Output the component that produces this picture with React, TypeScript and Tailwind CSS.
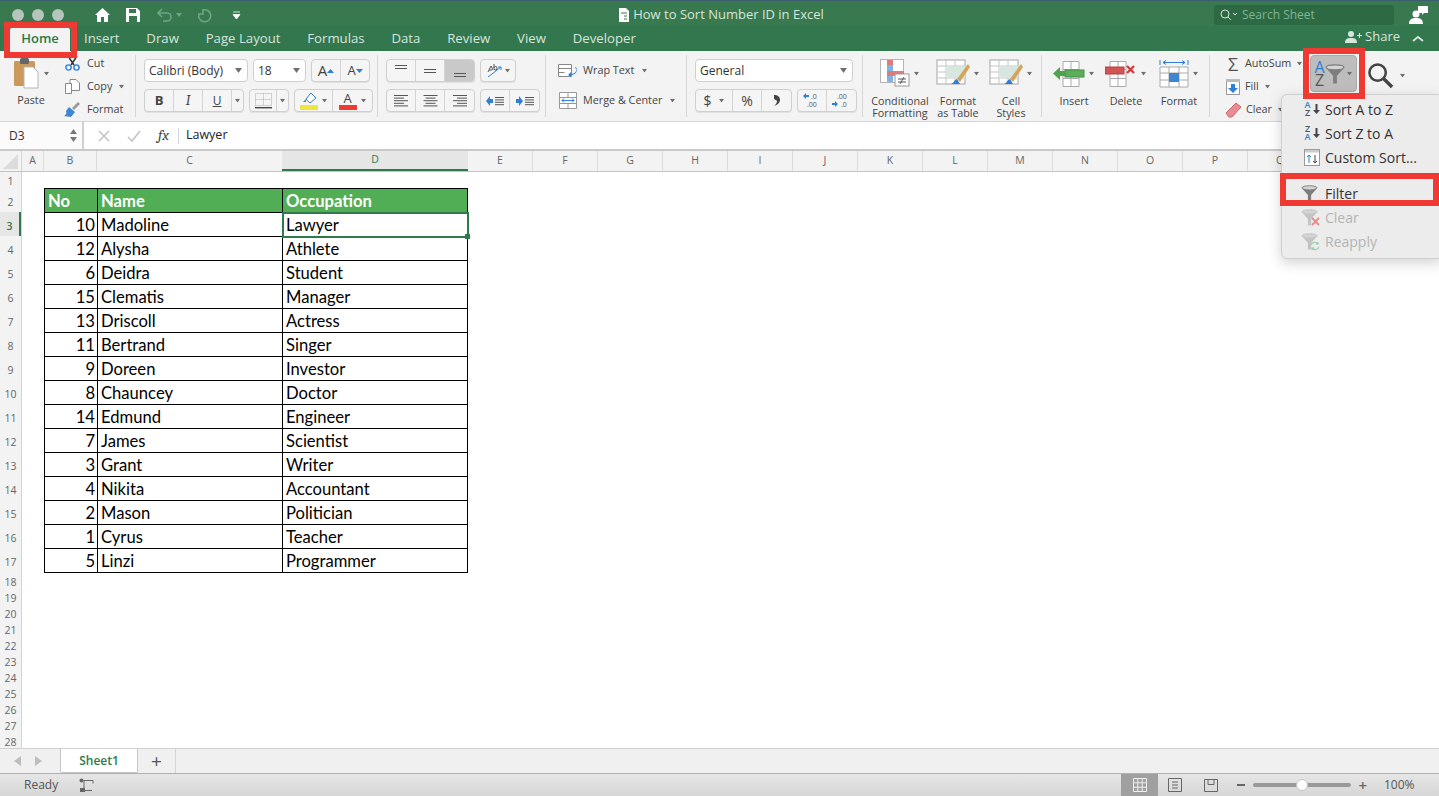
import React from 'react';

const ui = { fontFamily: '"Open Sans", "Liberation Sans", sans-serif' };
const cell = { fontFamily: 'Lato, "Liberation Sans", sans-serif' };

const columns = ['E', 'F', 'G', 'H', 'I', 'J', 'K', 'L', 'M', 'N', 'O', 'P', 'Q', 'R', 'S'];
const people: [number, string, string][] = [
  [10, 'Madoline', 'Lawyer'],
  [12, 'Alysha', 'Athlete'],
  [6, 'Deidra', 'Student'],
  [15, 'Clematis', 'Manager'],
  [13, 'Driscoll', 'Actress'],
  [11, 'Bertrand', 'Singer'],
  [9, 'Doreen', 'Investor'],
  [8, 'Chauncey', 'Doctor'],
  [14, 'Edmund', 'Engineer'],
  [7, 'James', 'Scientist'],
  [3, 'Grant', 'Writer'],
  [4, 'Nikita', 'Accountant'],
  [2, 'Mason', 'Politician'],
  [1, 'Cyrus', 'Teacher'],
  [5, 'Linzi', 'Programmer'],
];

function Caret({ className = '' }: { className?: string }) {
  return (
    <svg width="7" height="5" viewBox="0 0 7 5" className={`shrink-0 ${className}`}>
      <path d="M0 0h7L3.5 5z" fill="#6f6f6f" />
    </svg>
  );
}

function Funnel({ size = 18, color = '#7d7d7d' }: { size?: number; color?: string }) {
  return (
    <svg width={size} height={size} viewBox="0 0 18 18" className="shrink-0">
      <ellipse cx="9" cy="3" rx="8" ry="2.2" fill="#d4d4d4" stroke={color} strokeWidth="1" />
      <path d="M1 3.5 7.3 10.5V17.5H10.7V10.5L17 3.5C13 6 5 6 1 3.5z" fill={color} />
    </svg>
  );
}

function Seg({ w, children, active }: { w: number; children?: React.ReactNode; active?: boolean }) {
  return (
    <div
      style={{ width: w }}
      className={`flex h-full items-center justify-center border-r border-[#d4d4d4] last:border-r-0 ${active ? 'bg-[#c9c9c9]' : ''}`}
    >
      {children}
    </div>
  );
}

function BtnGroup({ children }: { children: React.ReactNode }) {
  return (
    <div className="flex h-[23px] overflow-hidden rounded-[4px] border border-[#cfcfcf] bg-[#f5f5f5] shadow-[0_1px_0_#e2e2e2]">
      {children}
    </div>
  );
}

function Lines({ kind }: { kind: 'l' | 'c' | 'r' }) {
  const rows = [14, 10, 14, 10, 14];
  return (
    <svg width="15" height="12" viewBox="0 0 15 12">
      {rows.map((w, i) => {
        const x = kind === 'l' ? 0 : kind === 'c' ? (15 - w) / 2 : 15 - w;
        return <rect key={i} x={x} y={i * 2.6} width={w} height="1" fill="#555" />;
      })}
    </svg>
  );
}

function Indent({ flip }: { flip?: boolean }) {
  return (
    <svg width="18" height="10" viewBox="0 0 18 10">
      <path d={flip ? 'M0 3h3V0l4 5-4 5V7H0z' : 'M7 3H4V0L0 5l4 5V7h3z'} fill="#2f7fd6" />
      {[1, 3.4, 5.8, 8.2].map((y) => (
        <rect key={y} x="9" y={y} width="9" height="1" fill="#555" />
      ))}
    </svg>
  );
}

function ClipRow({ icon, label, caret }: { icon: React.ReactNode; label: string; caret?: boolean }) {
  return (
    <div className="flex h-[23px] items-center">
      <div className="flex w-[20px] justify-center">{icon}</div>
      <span className="ml-[5px] text-[10.8px] text-[#444]">{label}</span>
      {caret && <Caret className="ml-[6px] scale-75" />}
    </div>
  );
}

function BigButton({ w, icon, lines, caret }: { w: number; icon: React.ReactNode; lines: string[]; caret?: boolean }) {
  return (
    <div style={{ width: w }} className="flex shrink-0 flex-col items-center">
      <div className="flex h-[37px] items-center justify-center">
        {icon}
        {caret && <Caret className="ml-[3px] scale-75" />}
      </div>
      <div className="mt-[3px] text-center text-[10.8px] leading-[12px] text-[#444]">
        {lines.map((l) => (
          <div key={l} className="whitespace-nowrap">{l}</div>
        ))}
      </div>
    </div>
  );
}

function VSep() {
  return <div className="mt-[4px] h-[62px] w-px shrink-0 bg-[#d6d6d6]" />;
}

function TableGridIcon({ children }: { children?: React.ReactNode }) {
  return (
    <svg width="34" height="30" viewBox="0 0 34 30">
      <rect x="1" y="1" width="28" height="24" fill="#fff" stroke="#a5a5a5" />
      <path d="M10 1v24M19 1v24M1 7h28M1 13h28M1 19h28" stroke="#c4c4c4" />
      {children}
    </svg>
  );
}

function Ribbon() {
  return (
    <div className="flex h-[71px] shrink-0 border-b border-[#d4d4d4] bg-[#f3f3f3]">
      {/* clipboard */}
      <div className="flex w-[135px] shrink-0">
        <div className="flex w-[62px] shrink-0 flex-col items-center">
          <div className="mt-[7px] flex items-center">
            <svg width="26" height="31" viewBox="0 0 26 31">
              <rect x="1" y="3" width="21" height="25" rx="1.5" fill="#c99a5b" />
              <rect x="7" y="0" width="9" height="6" rx="1.5" fill="#666" />
              <path d="M11 9h9l5 5v16H11z" fill="#fff" stroke="#b5b5b5" />
            </svg>
            <Caret className="ml-[4px] scale-75" />
          </div>
          <span className="mt-[3px] text-[10.8px] text-[#444]">Paste</span>
        </div>
        <div className="pt-[1px]">
          <ClipRow
            label="Cut"
            icon={
              <svg width="15" height="15" viewBox="0 0 15 15">
                <path d="M3 0l6 9M12 0 6 9" stroke="#333" strokeWidth="1.5" />
                <circle cx="3.5" cy="11.5" r="2.6" fill="none" stroke="#2f7fd6" strokeWidth="1.4" />
                <circle cx="11.5" cy="11.5" r="2.6" fill="none" stroke="#2f7fd6" strokeWidth="1.4" />
              </svg>
            }
          />
          <ClipRow
            label="Copy"
            caret
            icon={
              <svg width="15" height="15" viewBox="0 0 15 15">
                <path d="M5 .5h6l3.5 3.5v7.5H5z" fill="#fff" stroke="#888" />
                <path d="M.5 4.5h6v10h-6z" fill="#fff" stroke="#888" />
              </svg>
            }
          />
          <ClipRow
            label="Format"
            icon={
              <svg width="16" height="15" viewBox="0 0 16 15">
                <path d="M8 6 14 0l2 2-6 6z" fill="#9a9a9a" />
                <path d="M5 5l6 5-4 5-7-1c2-1 3-3 2-5z" fill="#3f86d1" />
              </svg>
            }
          />
        </div>
      </div>
      <VSep />

      {/* font */}
      <div className="flex w-[241px] shrink-0 flex-col gap-[7px] pl-[8px] pt-[8px]">
        <div className="flex gap-[5px]">
          <div className="flex h-[23px] w-[104px] items-center justify-between rounded-[4px] border border-[#cfcfcf] bg-white pl-[4px] pr-[5px] text-[12px] text-[#333]">
            Calibri (Body)<Caret />
          </div>
          <div className="flex h-[23px] w-[53px] items-center justify-between rounded-[4px] border border-[#cfcfcf] bg-white pl-[4px] pr-[5px] text-[12px] text-[#333]">
            18<Caret />
          </div>
          <BtnGroup>
            <Seg w={29}>
              <span className="text-[15px] text-[#444]">A</span>
              <svg width="7" height="4" viewBox="0 0 7 4"><path d="M0 4h7L3.5 0z" fill="#2f7fd6" /></svg>
            </Seg>
            <Seg w={28}>
              <span className="text-[13px] text-[#444]">A</span>
              <svg width="7" height="4" viewBox="0 0 7 4"><path d="M0 0h7L3.5 4z" fill="#2f7fd6" /></svg>
            </Seg>
          </BtnGroup>
        </div>
        <div className="flex gap-[5px]">
          <BtnGroup>
            <Seg w={29}><span className="text-[13px] font-bold text-[#444]">B</span></Seg>
            <Seg w={29}><span className="font-serif text-[14px] italic text-[#444]">I</span></Seg>
            <Seg w={29}><span className="text-[12px] text-[#444] underline">U</span></Seg>
            <Seg w={11}><Caret className="scale-75" /></Seg>
          </BtnGroup>
          <BtnGroup>
            <Seg w={27}>
              <svg width="17" height="16" viewBox="0 0 17 16">
                <path d="M.5.5h16v12H.5zM8.5.5v12M.5 6.5h16" fill="none" stroke="#aaa" strokeDasharray="1 1" />
                <rect x="0" y="14" width="17" height="1.4" fill="#444" />
              </svg>
            </Seg>
            <Seg w={11}><Caret className="scale-75" /></Seg>
          </BtnGroup>
          <BtnGroup>
            <Seg w={38}>
              <svg width="18" height="18" viewBox="0 0 18 18">
                <path d="M6 7l5-6 5 5-6 5z" fill="#fff" stroke="#2f7fd6" />
                <path d="M3 10 6 7v3z" fill="#777" />
                <rect x="0" y="13" width="18" height="5" fill="#f0e442" />
              </svg>
              <Caret className="ml-[3px] scale-75" />
            </Seg>
            <Seg w={39}>
              <div className="flex flex-col items-center">
                <span className="text-[13px] leading-[13px] text-[#444]">A</span>
                <div className="h-[5px] w-[18px] bg-[#ee3b33]" />
              </div>
              <Caret className="ml-[3px] scale-75" />
            </Seg>
          </BtnGroup>
        </div>
      </div>
      <VSep />

      {/* alignment */}
      <div className="flex w-[167px] shrink-0 flex-col gap-[7px] pl-[8px] pt-[8px]">
        <div className="flex gap-[5px]">
          <BtnGroup>
            <Seg w={29}>
              <svg width="14" height="14" viewBox="0 0 14 14"><path d="M1 1.5h12M1 4.5h12" stroke="#555" /></svg>
            </Seg>
            <Seg w={29}>
              <svg width="14" height="14" viewBox="0 0 14 14"><path d="M1 5.5h12M1 8.5h12" stroke="#555" /></svg>
            </Seg>
            <Seg w={29} active>
              <svg width="14" height="14" viewBox="0 0 14 14"><path d="M1 9.5h12M1 12.5h12" stroke="#555" /></svg>
            </Seg>
          </BtnGroup>
          <BtnGroup>
            <div className="flex h-full w-[34px] items-center justify-center gap-[2px]">
              <svg width="16" height="16" viewBox="0 0 16 16">
                <path d="M2 14 15 4M15 4h-3M15 4v3" stroke="#2f7fd6" fill="none" />
                <path d="M2 9l3-6 2 4M3 7h3" stroke="#555" fill="none" />
                <path d="M8 1v5a1.5 1.5 0 0 0 3-1 1.5 1.5 0 0 0-3 0" stroke="#555" fill="none" />
              </svg>
              <Caret className="scale-75" />
            </div>
          </BtnGroup>
        </div>
        <div className="flex gap-[5px]">
          <BtnGroup>
            <Seg w={29}><Lines kind="l" /></Seg>
            <Seg w={29}><Lines kind="c" /></Seg>
            <Seg w={29}><Lines kind="r" /></Seg>
          </BtnGroup>
          <BtnGroup>
            <Seg w={29}><Indent /></Seg>
            <Seg w={29}><Indent flip /></Seg>
          </BtnGroup>
        </div>
      </div>
      <VSep />

      {/* wrap and merge */}
      <div className="flex w-[140px] shrink-0 flex-col gap-[7px] pl-[12px] pt-[8px] text-[10.8px] text-[#444]">
        <div className="flex h-[23px] items-center">
          <svg width="20" height="13" viewBox="0 0 20 13">
            <path d="M.5.5h13v12H.5zM.5 4.5h13M.5 8.5h6" fill="#fff" stroke="#888" />
            <path d="M17 3c3 4 0 7-4 7V8l-3 3 3 2v-2c5 0 7-4 5-8z" fill="#2f7fd6" />
          </svg>
          <span className="ml-[5px]">Wrap Text</span>
          <Caret className="ml-[7px] scale-75" />
        </div>
        <div className="flex h-[23px] items-center">
          <svg width="18" height="17" viewBox="0 0 18 17" className="ml-[1px]">
            <path d="M.5.5h17v16H.5zM.5 5.5h17M.5 11.5h17M9 .5v5M9 11.5v5" fill="#fff" stroke="#999" />
            <path d="M3 8.5h12M3 8.5l2-2M3 8.5l2 2M15 8.5l-2-2M15 8.5l-2 2" stroke="#2f7fd6" fill="none" />
          </svg>
          <span className="ml-[6px]">Merge &amp; Center</span>
          <Caret className="ml-[7px] scale-75" />
        </div>
      </div>
      <VSep />

      {/* number */}
      <div className="flex w-[175px] shrink-0 flex-col gap-[7px] pl-[8px] pt-[8px]">
        <div className="flex h-[23px] w-[158px] items-center justify-between rounded-[4px] border border-[#cfcfcf] bg-white pl-[4px] pr-[5px] text-[12px] text-[#333]">
          General<Caret />
        </div>
        <div className="flex gap-[5px]">
          <BtnGroup>
            <Seg w={37}>
              <span className="text-[14px] text-[#444]">$</span>
              <Caret className="ml-[6px] scale-75" />
            </Seg>
            <Seg w={29}><span className="text-[14px] text-[#444]">%</span></Seg>
            <Seg w={29}>
              <svg width="7" height="11" viewBox="0 0 7 11"><path d="M1 0c4 0 6 2 6 5s-3 5-6 6c2-2 3-3 3-5 0-1-3-1-3-3z" fill="#444" /></svg>
            </Seg>
          </BtnGroup>
          <BtnGroup>
            <Seg w={29}>
              <svg width="19" height="15" viewBox="0 0 19 15">
                <path d="M6 2H3V0L0 3l3 3V4h3z" fill="#2f7fd6" />
                <text x="8" y="6" fontSize="7" fill="#555">.0</text>
                <text x="4" y="14" fontSize="7" fill="#555">.00</text>
              </svg>
            </Seg>
            <Seg w={29}>
              <svg width="19" height="15" viewBox="0 0 19 15">
                <text x="5" y="6" fontSize="7" fill="#555">.00</text>
                <path d="M0 10h3V8l3 3-3 3v-2H0z" fill="#2f7fd6" />
                <text x="9" y="14" fontSize="7" fill="#555">.0</text>
              </svg>
            </Seg>
          </BtnGroup>
        </div>
      </div>
      <VSep />

      {/* styles */}
      <div className="flex w-[178px] shrink-0 pl-[7px] pt-[4px]">
        <BigButton
          w={60}
          caret
          lines={['Conditional', 'Formatting']}
          icon={
            <svg width="30" height="30" viewBox="0 0 30 30">
              <rect x=".5" y=".5" width="23" height="23" fill="#fff" stroke="#b5b5b5" />
              <rect x="7" y="1" width="6" height="5" fill="#df7b7b" />
              <rect x="7" y="6" width="6" height="6" fill="#7fb2e5" />
              <rect x="7" y="12" width="17" height="5" fill="#df7b7b" />
              <rect x="7" y="17" width="6" height="6" fill="#7fb2e5" />
              <rect x="15" y="15" width="14" height="12" fill="#fff" stroke="#999" />
              <path d="M18 20h8M18 23h8M24 18l-4 7" stroke="#555" fill="none" />
            </svg>
          }
        />
        <BigButton
          w={56}
          caret
          lines={['Format', 'as Table']}
          icon={
            <TableGridIcon>
              <rect x="10" y="7" width="19" height="12" fill="#d8e6e0" />
              <path d="M32 5 21 20l3 3L34 8z" fill="#d5a45c" />
              <path d="M21 20c-3 1-3 4-6 5h9z" fill="#2f7fd6" />
            </TableGridIcon>
          }
        />
        <BigButton
          w={50}
          caret
          lines={['Cell', 'Styles']}
          icon={
            <TableGridIcon>
              <rect x="10" y="7" width="19" height="12" fill="#d8e6e0" />
              <path d="M32 5 21 20l3 3L34 8z" fill="#d5a45c" />
              <path d="M21 20c-3 1-3 4-6 5h9z" fill="#2f7fd6" />
            </TableGridIcon>
          }
        />
      </div>
      <VSep />

      {/* cells */}
      <div className="flex w-[167px] shrink-0 pl-[8px] pt-[4px]">
        <BigButton
          w={48}
          caret
          lines={['Insert']}
          icon={
            <svg width="32" height="26" viewBox="0 0 32 26">
              <path d="M10 .5h16v25H10zM18 .5v25M10 8.5h16M10 17.5h16" fill="#fff" stroke="#aaa" />
              <rect x="12" y="9" width="19" height="7" fill="#5cae5c" stroke="#3f8f3f" />
              <path d="M0 12.5 7 6v13z" fill="#4fa34f" />
              <rect x="5" y="10" width="7" height="5" fill="#4fa34f" />
            </svg>
          }
        />
        <BigButton
          w={56}
          caret
          lines={['Delete']}
          icon={
            <svg width="32" height="26" viewBox="0 0 32 26">
              <path d="M5 .5h16v25H5zM13 .5v25M5 8.5h16M5 17.5h16" fill="#fff" stroke="#aaa" />
              <rect x="0" y="6" width="19" height="7" fill="#d25555" stroke="#b54040" />
              <path d="M22 5l7 7M29 5l-7 7" stroke="#cf3a3a" strokeWidth="2.2" />
            </svg>
          }
        />
        <BigButton
          w={50}
          caret
          lines={['Format']}
          icon={
            <svg width="30" height="30" viewBox="0 0 30 30">
              <path d="M1 1v5M29 1v5M4 3.5h22M4 3.5l3-2M4 3.5l3 2M26 3.5l-3-2M26 3.5l-3 2" stroke="#2f7fd6" fill="none" />
              <path d="M1 8h28v20H1zM10 8v20M20 8v20M1 14h28M1 21h28" fill="#fff" stroke="#aaa" />
              <rect x="10" y="14" width="10" height="9" fill="#3f86d1" />
            </svg>
          }
        />
      </div>
      <VSep />

      {/* editing */}
      <div className="flex shrink-0 pt-[1px]">
        <div className="ml-[15px] w-[85px]">
          <div className="flex h-[23px] items-center text-[10.8px] text-[#444]">
            <span className="flex w-[16px] justify-center text-[18px] leading-none text-[#555]">&#x3A3;</span>
            <span className="ml-[4px]">AutoSum</span>
            <Caret className="ml-[5px] scale-75" />
          </div>
          <div className="flex h-[23px] items-center text-[10.8px] text-[#444]">
            <svg width="14" height="16" viewBox="0 0 14 16" className="ml-[1px]">
              <rect x=".5" y=".5" width="13" height="15" fill="#fff" stroke="#999" />
              <rect x="0" y="0" width="14" height="3" fill="#bbb" />
              <path d="M5 5h4v4h3l-5 5-5-5h3z" fill="#2f7fd6" />
            </svg>
            <span className="ml-[5px]">Fill</span>
            <Caret className="ml-[5px] scale-75" />
          </div>
          <div className="flex h-[23px] items-center text-[10.8px] text-[#444]">
            <svg width="17" height="16" viewBox="0 0 17 16">
              <path d="M1 11 11 1l5 4L7 15H4z" fill="#e88b93" stroke="#c86a72" />
            </svg>
            <span className="ml-[4px]">Clear</span>
            <Caret className="ml-[5px] scale-75" />
          </div>
        </div>
        <div className="mt-[3px] flex h-[37px] w-[47px] items-center justify-center rounded-[4px] border border-[#aaa] bg-[#bdbdbd]">
          <div className="flex flex-col items-center leading-[13px]">
            <span className="text-[16px] text-[#2f7fd6]">A</span>
            <span className="text-[16px] text-[#555]">Z</span>
          </div>
          <Funnel size={20} />
          <Caret className="ml-[1px] scale-75" />
        </div>
        <div className="ml-[10px] mt-[5px] flex h-[36px] items-center">
          <svg width="27" height="27" viewBox="0 0 28 28">
            <circle cx="11" cy="11" r="8.5" fill="none" stroke="#444" strokeWidth="2.6" />
            <path d="M17 17l9 9" stroke="#444" strokeWidth="3.6" />
          </svg>
          <Caret className="ml-[5px] scale-75" />
        </div>
      </div>
    </div>
  );
}

function FilterMenu() {
  const row = 'flex h-[24px] items-center';
  return (
    <div className="absolute left-[1281px] top-[94px] z-10 h-[165px] w-[162px] rounded-[6px] border border-[#cfcfcf] bg-[#ececec] pt-[2px] text-[14px] text-[#333] shadow-[0_4px_14px_rgba(0,0,0,0.18)]">
      <div className={row}>
        <div className="flex w-[43px] items-center justify-center gap-[3px] pl-[18px] text-[9px] font-semibold leading-[8px]">
          <div className="flex flex-col items-center"><span className="text-[#2f7fd6]">A</span><span className="text-[#555]">Z</span></div>
          <svg width="7" height="10" viewBox="0 0 7 10"><path d="M2.5 0h2v6H7L3.5 10 0 6h2.5z" fill="#444" /></svg>
        </div>
        Sort A to Z
      </div>
      <div className={row}>
        <div className="flex w-[43px] items-center justify-center gap-[3px] pl-[18px] text-[9px] font-semibold leading-[8px]">
          <div className="flex flex-col items-center"><span className="text-[#555]">Z</span><span className="text-[#2f7fd6]">A</span></div>
          <svg width="7" height="10" viewBox="0 0 7 10"><path d="M2.5 0h2v6H7L3.5 10 0 6h2.5z" fill="#444" /></svg>
        </div>
        Sort Z to A
      </div>
      <div className={row}>
        <div className="flex w-[43px] justify-center pl-[16px]">
          <svg width="16" height="17" viewBox="0 0 16 17">
            <rect x=".5" y=".5" width="15" height="16" fill="#fff" stroke="#999" />
            <rect x="1" y="1" width="14" height="2.5" fill="#ccc" />
            <path d="M5 14V6M3 8l2-2 2 2" stroke="#2f7fd6" fill="none" />
            <path d="M11 6v8M9 12l2 2 2-2" stroke="#444" fill="none" />
          </svg>
        </div>
        Custom Sort...
      </div>
      <div className="my-[5px] h-px bg-[#d9d9d9]" />
      <div className={`${row} mt-[6px]`}>
        <div className="flex w-[43px] justify-center pl-[12px]"><Funnel size={17} /></div>
        Filter
      </div>
      <div className={`${row} text-[#b4b4b4]`}>
        <div className="relative flex w-[43px] justify-center pl-[12px]">
          <Funnel size={17} color="#c4c4c4" />
          <svg width="9" height="9" viewBox="0 0 9 9" className="absolute left-[29px] top-[8px]">
            <path d="M1 1l7 7M8 1 1 8" stroke="#e48a8a" strokeWidth="1.8" />
          </svg>
        </div>
        Clear
      </div>
      <div className={`${row} text-[#b4b4b4]`}>
        <div className="relative flex w-[43px] justify-center pl-[12px]">
          <Funnel size={17} color="#c4c4c4" />
          <svg width="10" height="10" viewBox="0 0 10 10" className="absolute left-[28px] top-[8px]">
            <path d="M1 4a4 4 0 0 1 7-1M9 6a4 4 0 0 1-7 1M8 1v2H6M2 9V7h2" fill="none" stroke="#9fcfb2" strokeWidth="1.3" />
          </svg>
        </div>
        Reapply
      </div>
    </div>
  );
}

export default function App() {
  return (
    <div style={ui} className="relative flex h-[796px] w-[1439px] flex-col overflow-hidden bg-white">
      {/* title bar */}
      <div className="flex h-[26px] shrink-0 items-center border-t border-[#3c5e70] bg-[#38794f] pt-[3px] text-white">
        <div className="flex flex-1 items-center pl-[12px]">
          <div className="flex gap-[8px]">
            <div className="size-[12px] rounded-full bg-[#b5c5bb]" />
            <div className="size-[12px] rounded-full bg-[#b5c5bb]" />
            <div className="size-[12px] rounded-full bg-[#b5c5bb]" />
          </div>
          <svg width="15" height="14" viewBox="0 0 15 14" className="ml-[31px]">
            <path d="M7.5 0 15 7h-2v7H9V9H6v5H2V7H0z" fill="#fff" />
          </svg>
          <svg width="14" height="14" viewBox="0 0 14 14" className="ml-[16px]">
            <path d="M0 0h11l3 3v11H0zM3 1v4h7V1zM3 8v6h8V8z" fill="#fff" fillRule="evenodd" />
          </svg>
          <svg width="16" height="14" viewBox="0 0 16 14" className="ml-[17px]">
            <path d="M1 5h9a4 4 0 0 1 0 8H6M5 1 1 5l4 4" fill="none" stroke="#6fa586" strokeWidth="1.6" />
          </svg>
          <svg width="6" height="4" viewBox="0 0 6 4" className="ml-[3px]"><path d="M0 0h6L3 4z" fill="#6fa586" /></svg>
          <svg width="15" height="15" viewBox="0 0 15 15" className="ml-[15px]">
            <path d="M6 1v5H1M6 2a6 6 0 1 1-4 4" fill="none" stroke="#6fa586" strokeWidth="1.6" />
          </svg>
          <svg width="9" height="9" viewBox="0 0 9 9" className="ml-[20px]">
            <path d="M1 1h7M1 3.5h7L4.5 8z" fill="#fff" stroke="#fff" strokeWidth="0.8" />
          </svg>
        </div>
        <div className="flex items-center text-[13px] text-[#d6e6dc]">
          <svg width="13" height="14" viewBox="0 0 13 14" className="mr-[4px]">
            <path d="M3 0h7l3 3v11H3z" fill="#fff" />
            <path d="M5 5h6M8 8h3M8 11h3" stroke="#38794f" />
          </svg>
          How to Sort Number ID in Excel
        </div>
        <div className="flex flex-1 items-center justify-end pr-[11px]">
          <div className="flex h-[20px] w-[180px] items-center rounded-[3px] bg-[#2d6a44] pl-[6px] text-[12px] text-[#7db595]">
            <svg width="17" height="12" viewBox="0 0 17 12" className="mr-[5px]">
              <circle cx="5" cy="5" r="4" fill="none" stroke="#d6e6dc" />
              <path d="M8 8l3 3M13 4l2 2 2-2" stroke="#d6e6dc" fill="none" />
            </svg>
            Search Sheet
          </div>
          <svg width="19" height="18" viewBox="0 0 19 18" className="ml-[15px]">
            <circle cx="7" cy="8" r="3.5" fill="#fff" />
            <path d="M0 18c0-5 3-6 7-6s7 1 7 6zM9 0h10v7h-4l-2 2V7H9z" fill="#fff" />
          </svg>
        </div>
      </div>

      {/* tabs */}
      <div className="flex h-[25px] shrink-0 items-end bg-[#33774f] pl-[10px] text-[13.2px] text-[#d6e6dc]">
        <div className="flex h-[23px] w-[60px] items-center justify-center rounded-t-[2px] bg-[#f3f3f3] pb-[2px] text-[13px] font-semibold text-[#2a7a4c]">Home</div>
        <div className="flex h-[23px] items-center gap-[26.8px] pb-[2px] pl-[14px]">
          <span>Insert</span>
          <span>Draw</span>
          <span>Page Layout</span>
          <span>Formulas</span>
          <span>Data</span>
          <span>Review</span>
          <span>View</span>
          <span>Developer</span>
        </div>
        <div className="ml-auto flex h-[25px] items-start pr-[15px] text-[13px] font-medium">
          <svg width="17" height="12" viewBox="0 0 17 12" className="mr-[3px] mt-[5px]">
            <circle cx="6" cy="3" r="3" fill="#d6e6dc" />
            <path d="M0 12c0-4 2-5 6-5s6 1 6 5zM12 4h2V2h1v2h2v1h-2v2h-1V5h-2z" fill="#d6e6dc" />
          </svg>
          <span className="leading-[20px]">Share</span>
          <svg width="12" height="7" viewBox="0 0 12 7" className="ml-[12px] mt-[9px]">
            <path d="M1 6l5-4 5 4" fill="none" stroke="#d6e6dc" strokeWidth="1.8" />
          </svg>
        </div>
      </div>

      <Ribbon />

      {/* formula bar */}
      <div className="flex h-[29px] shrink-0 items-stretch border-b-2 border-[#c9c9c9] bg-white">
        <div className="flex w-[84px] shrink-0 items-center justify-between border-r-2 border-[#d0d0d0] bg-[#fbfbfb] pl-[9px] pr-[5px] text-[12px] text-[#333]">
          D3
          <div className="flex flex-col gap-[3px]">
            <svg width="7" height="5" viewBox="0 0 7 5"><path d="M0 5h7L3.5 0z" fill="#777" /></svg>
            <svg width="7" height="5" viewBox="0 0 7 5"><path d="M0 0h7L3.5 5z" fill="#777" /></svg>
          </div>
        </div>
        <div className="flex items-center pl-[14px]">
          <svg width="12" height="12" viewBox="0 0 12 12"><path d="M1 1l10 10M11 1 1 11" stroke="#c4c4c4" strokeWidth="1.6" /></svg>
          <svg width="14" height="12" viewBox="0 0 14 12" className="ml-[17px]"><path d="M1 7l4 4 8-10" fill="none" stroke="#c4c4c4" strokeWidth="1.6" /></svg>
          <span className="ml-[17px] font-serif text-[15px] italic text-[#444]">fx</span>
          <div className="ml-[9px] h-[16px] w-px bg-[#d4d4d4]" />
          <span className="ml-[7px] text-[12.5px] text-[#222]">Lawyer</span>
        </div>
      </div>

      {/* column headers */}
      <div className="flex h-[21px] shrink-0 border-b border-[#c4c4c4] bg-[#f3f3f3] text-[10.5px] text-[#666]">
        <div className="flex w-[22px] shrink-0 items-center justify-center border-r border-[#d4d4d4]">
          <svg width="15" height="15" viewBox="0 0 15 15"><path d="M15 0v15H0z" fill="#dcdcdc" /></svg>
        </div>
        <div className="flex w-[22px] shrink-0 items-center justify-center border-r border-[#dcdcdc]">A</div>
        <div className="flex w-[53px] shrink-0 items-center justify-center border-r border-[#dcdcdc]">B</div>
        <div className="flex w-[185px] shrink-0 items-center justify-center">C</div>
        <div className="flex w-[186px] shrink-0 items-center justify-center border-b-2 border-[#2f7a4b] bg-[#e6e6e6] text-[#2f7a4b]">D</div>
        {columns.map((c) => (
          <div key={c} className="flex w-[65px] shrink-0 items-center justify-center border-r border-[#dcdcdc]">{c}</div>
        ))}
      </div>

      {/* sheet */}
      <div className="flex h-[576px] shrink-0 overflow-hidden">
        <div className="w-[22px] shrink-0 border-r border-[#d4d4d4] bg-[#f3f3f3] text-center text-[10.5px] text-[#666]">
          <div className="h-[16px] leading-[18px]">1</div>
          <div className="h-[24px] leading-[28px]">2</div>
          {people.map((_, i) =>
            i === 0 ? (
              <div key={i} className="h-[24px] border-r-2 border-[#2f7a4b] bg-[#e6e6e6] font-semibold leading-[28px] text-[#2f7a4b]">3</div>
            ) : (
              <div key={i} className="h-[24px] leading-[28px]">{i + 3}</div>
            ),
          )}
          {[18, 19, 20, 21, 22, 23, 24, 25, 26, 27, 28].map((n) => (
            <div key={n} className="h-[16px] leading-[20px]">{n}</div>
          ))}
        </div>
        <div style={cell} className="flex-1 pl-[22px] pt-[16px] text-[16.6px] text-black">
          <div className="relative w-[424px] border-l border-t border-black">
            <div className="grid h-[24px] grid-cols-[53px_185px_185px] bg-[#52ae54] font-bold leading-[25px] text-white">
              <div className="h-[24px] border-b border-r border-black pl-[3px]">No</div>
              <div className="h-[24px] border-b border-r border-black pl-[3px]">Name</div>
              <div className="h-[24px] border-b border-r border-black pl-[3px]">Occupation</div>
            </div>
            {people.map(([no, name, job]) => (
              <div key={name} className="grid h-[24px] grid-cols-[53px_185px_185px] leading-[25px]">
                <div className="h-[24px] border-b border-r border-black pr-[2px] text-right">{no}</div>
                <div className="h-[24px] border-b border-r border-black pl-[3px]">{name}</div>
                <div className="h-[24px] border-b border-r border-black pl-[3px]">{job}</div>
              </div>
            ))}
            <div className="absolute left-[237px] top-[23px] h-[26px] w-[187px] border-2 border-[#2f7a4b]">
              <div className="absolute -bottom-[3px] -right-[3px] size-[5px] bg-[#2f7a4b]" />
            </div>
          </div>
        </div>
      </div>

      {/* sheet tabs */}
      <div className="flex h-[25px] shrink-0 items-stretch border-t border-[#d0d0d0] bg-[#f0f0f0]">
        <div className="flex w-[60px] shrink-0 items-center gap-[14px] pl-[14px]">
          <svg width="7" height="10" viewBox="0 0 7 10"><path d="M7 0v10L0 5z" fill="#bdbdbd" /></svg>
          <svg width="7" height="10" viewBox="0 0 7 10"><path d="M0 0v10l7-5z" fill="#bdbdbd" /></svg>
        </div>
        <div className="flex w-[78px] items-center justify-center rounded-b-[2px] border-x border-b border-[#c4c4c4] bg-white text-[12px] font-semibold text-[#2f7a4b]">Sheet1</div>
        <div className="flex w-[38px] items-center justify-center border-r border-[#d4d4d4] text-[19px] leading-none text-[#555]">+</div>
      </div>

      {/* status bar */}
      <div className="flex h-[23px] shrink-0 items-center border-t border-[#b0b0b0] bg-gradient-to-b from-[#e6e6e6] to-[#d6d6d6] text-[12px] text-[#555]">
        <span className="ml-[24px]">Ready</span>
        <svg width="15" height="14" viewBox="0 0 15 14" className="ml-[21px]">
          <circle cx="2.5" cy="2.5" r="2" fill="#666" />
          <path d="M5 2.5h9v3M5 12.5h8M5 2v9" fill="none" stroke="#666" />
          <rect x="1" y="10" width="5" height="4" fill="#666" />
        </svg>
        <div className="ml-auto flex h-full items-center">
          <div className="flex h-full w-[37px] items-center justify-center bg-[#a0a0a0]">
            <svg width="14" height="14" viewBox="0 0 14 14">
              <path d="M.5.5h13v13H.5zM4.8.5v13M9.2.5v13M.5 4.8h13M.5 9.2h13" fill="none" stroke="#efefef" />
            </svg>
          </div>
          <svg width="14" height="14" viewBox="0 0 14 14" className="ml-[10px]">
            <path d="M.5.5h13v13H.5zM4 4h6M4 7h6M4 10h6" fill="none" stroke="#666" />
          </svg>
          <svg width="14" height="13" viewBox="0 0 14 13" className="ml-[22px]">
            <path d="M.5.5h13v12H.5zM4 .5v5h6v-5" fill="none" stroke="#666" />
          </svg>
          <span className="ml-[19px] h-[2px] w-[8px] bg-[#666]" />
          <div className="relative ml-[8px] h-[4px] w-[98px] rounded-full bg-[#999]">
            <div className="absolute left-[43px] top-[-4px] size-[12px] rounded-full border border-[#c4c4c4] bg-white" />
          </div>
          <span className="ml-[7px] text-[15px] font-semibold leading-none text-[#666]">+</span>
          <span className="ml-[17px] w-[30px]">100%</span>
          <span className="w-[25px]" />
        </div>
      </div>

      <FilterMenu />

      {/* red annotation boxes */}
      <div className="absolute left-[4px] top-[22px] z-20 h-[36px] w-[73px] border-[6px] border-[#ee3a32]" />
      <div className="absolute left-[1303px] top-[48px] z-20 h-[51px] w-[62px] border-[6px] border-[#ee3a32]" />
      <div className="absolute left-[1280px] top-[173px] z-20 h-[33px] w-[159px] border-[6px] border-[#ee3a32]" />
    </div>
  );
}
